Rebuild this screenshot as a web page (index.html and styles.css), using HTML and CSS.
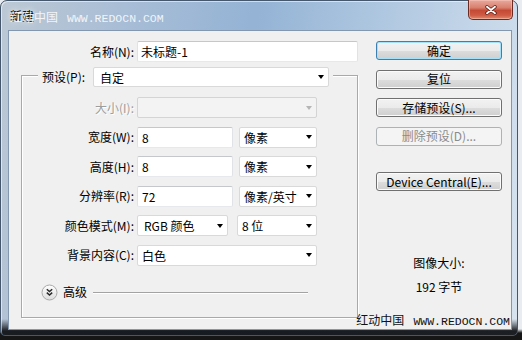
FILE: index.html
```html
<!DOCTYPE html>
<html lang="zh-CN">
<head>
    <meta charset="UTF-8">
    <title>新建</title>
    <link rel="stylesheet" href="styles.css">
</head>
<body>

<div class="window">
    <div class="titlebar">
        <span class="title">新建</span>
        <span class="watermark watermark-top">红动中国<span class="wm-url">WWW.REDOCN.COM</span></span>
        <button class="close-btn" aria-label="关闭">
            <svg width="14" height="10" viewBox="0 0 14 10">
                <path d="M3 1.8 L11 8.2 M11 1.8 L3 8.2" stroke="#5a2018" stroke-width="3.4" stroke-linecap="round"/>
                <path d="M3 1.8 L11 8.2 M11 1.8 L3 8.2" stroke="#fff" stroke-width="1.9" stroke-linecap="round"/>
            </svg>
        </button>
    </div>

    <div class="client">
        <div class="form-col">
            <div class="row">
                <label class="lbl">名称(N):</label>
                <div class="field field-name">未标题-1</div>
            </div>

            <div class="group">
                <div class="preset-row">
                    <label class="preset-lbl">预设(P):</label>
                    <div class="select select-preset">自定</div>
                </div>

                <div class="group-rows">
                    <div class="row">
                        <label class="lbl disabled">大小(I):</label>
                        <div class="select select-wide is-disabled"></div>
                    </div>
                    <div class="row">
                        <label class="lbl">宽度(W):</label>
                        <div class="field field-num">8</div>
                        <div class="select select-unit">像素</div>
                    </div>
                    <div class="row">
                        <label class="lbl">高度(H):</label>
                        <div class="field field-num">8</div>
                        <div class="select select-unit">像素</div>
                    </div>
                    <div class="row">
                        <label class="lbl">分辨率(R):</label>
                        <div class="field field-num">72</div>
                        <div class="select select-unit">像素/英寸</div>
                    </div>
                    <div class="row">
                        <label class="lbl">颜色模式(M):</label>
                        <div class="select select-mode">RGB 颜色</div>
                        <div class="select select-bits">8 位</div>
                    </div>
                    <div class="row">
                        <label class="lbl">背景内容(C):</label>
                        <div class="select select-wide">白色</div>
                    </div>
                </div>

                <div class="advanced">
                    <svg width="17" height="17" viewBox="0 0 17 17">
                        <defs>
                            <linearGradient id="adv" x1="0" y1="0" x2="0" y2="1">
                                <stop offset="0" stop-color="#ffffff"/>
                                <stop offset="1" stop-color="#dcdcdc"/>
                            </linearGradient>
                        </defs>
                        <circle cx="8.5" cy="8.5" r="7.5" fill="url(#adv)" stroke="#a9a9a9"/>
                        <path d="M5.8 5.2 L8.5 7.6 L11.2 5.2 M5.8 8.6 L8.5 11 L11.2 8.6" stroke="#2a2a2a" stroke-width="1.5" fill="none"/>
                    </svg>
                    <span class="adv-text">高级</span>
                    <span class="adv-line"></span>
                </div>
            </div>
        </div>

        <div class="btn-col">
            <button class="btn btn-default">确定</button>
            <button class="btn">复位</button>
            <button class="btn">存储预设(S)...</button>
            <button class="btn" disabled>删除预设(D)...</button>
            <button class="btn btn-device">Device Central(E)...</button>

            <div class="img-size">
                <div>图像大小:</div>
                <div>192 字节</div>
            </div>
        </div>

        <span class="watermark watermark-bottom">红动中国<span class="wm-url">WWW.REDOCN.COM</span></span>
    </div>
</div>

</body>
</html>
```

FILE: styles.css
```css
    body {
        margin: 0;
        width: 522px;
        height: 340px;
        overflow: hidden;
        font-family: "Noto Sans CJK SC", sans-serif;
        font-size: 12px;
        color: #000;
        background: linear-gradient(to bottom, #e9edf1 0, #e9edf1 329px, #161616 333px);
    }

    .window {
        width: 518px;
        height: 336px;
        box-sizing: border-box;
        border: 1px solid #44576c;
        border-radius: 7px 7px 5px 5px;
        padding: 0 5px 5px 7px;
        display: flex;
        flex-direction: column;
        background:
            linear-gradient(to bottom, rgba(12, 14, 18, 0) 318px, rgba(12, 14, 18, .92) 330px),
            linear-gradient(100deg, #bcc8d4 0%, #a8bdd6 22%, #94b3d5 45%, #a9c3de 62%, #c6d7e9 85%, #d8e3ef 100%);
        box-shadow: inset 1px 1px 0 rgba(255, 255, 255, .55);
    }

    /* title bar */
    .titlebar {
        height: 29px;
        flex: none;
        display: flex;
        align-items: flex-start;
        justify-content: space-between;
        position: relative;
    }

    .title {
        padding: 7px 0 0 2px;
        line-height: 16px;
        text-shadow: 0 0 6px rgba(255, 255, 255, .9);
    }

    .close-btn {
        width: 45px;
        height: 20px;
        margin: -1px -1px 0 0;
        padding: 0;
        display: flex;
        align-items: center;
        justify-content: center;
        border: 1px solid #6b2a22;
        border-top: none;
        border-radius: 0 0 5px 5px;
        background: linear-gradient(to bottom, #e9a99c 0%, #d8806f 40%, #c44a35 55%, #cf5a43 80%, #e08a6e 100%);
        box-shadow: inset 0 0 0 1px rgba(255, 210, 200, .45);
    }

    .watermark {
        display: flex;
        align-items: baseline;
        gap: 9px;
        line-height: 14px;
        white-space: nowrap;
    }

    .wm-url {
        font-family: "Liberation Mono", monospace;
        font-size: 11.5px;
    }

    .watermark-top {
        position: absolute;
        left: 2px;
        top: 9px;
        color: rgba(255, 255, 255, .85);
    }

    .watermark-bottom {
        position: absolute;
        right: 1px;
        bottom: 0;
        color: #111;
    }

    /* client area */
    .client {
        flex: 1;
        position: relative;
        display: flex;
        padding: 10px 0 0 12px;
        background: #f0f0f0;
        border: 1px solid #8397ae;
    }

    .form-col {
        width: 337px;
        flex: none;
    }

    .row {
        display: flex;
        align-items: center;
        height: 21px;
    }

    .lbl {
        width: 116px;
        padding-right: 3px;
        box-sizing: border-box;
        text-align: right;
        white-space: nowrap;
        line-height: 16px;
    }

    .lbl.disabled {
        color: #9d9d9d;
        text-shadow: 1px 1px 0 #fff;
    }

    .field, .select {
        height: 21px;
        box-sizing: border-box;
        background: #fff;
        border: 1px solid #d9d9d9;
        border-radius: 2px;
        padding: 0 4px;
        line-height: 19px;
        white-space: nowrap;
    }

    .field {
        border-color: #c4c7cc #dfe2e6 #e6e8eb #dfe2e6;
    }

    .field-name {
        width: 221px;
        padding-left: 3px;
    }

    .field-num {
        width: 96px;
    }

    .select {
        display: flex;
        align-items: center;
        padding-right: 4px;
    }

    .select::after {
        content: "";
        margin-left: auto;
        border-left: 3.5px solid transparent;
        border-right: 3.5px solid transparent;
        border-top: 4px solid #000;
    }

    .select.is-disabled {
        background: #f3f3f3;
        border-color: #d4d4d4;
    }

    .select.is-disabled::after {
        border-top-color: #b5b5b5;
    }

    .select-preset {
        width: 236px;
        height: 20px;
        padding-left: 6px;
    }

    .select-wide {
        width: 180px;
    }

    .select-unit {
        width: 78px;
        margin-left: 6px;
    }

    .select-mode {
        width: 91px;
        padding-left: 6px;
    }

    .select-bits {
        width: 80px;
        margin-left: 9px;
    }

    /* group box */
    .group {
        margin-top: 13px;
        border: 1px solid #a9a9a9;
        box-shadow: 1px 1px 0 #fff, inset 1px 1px 0 #fff;
        padding-bottom: 16px;
    }

    .preset-row {
        display: flex;
        align-items: center;
        height: 20px;
        width: fit-content;
        margin: -9px 0 0 16px;
        padding: 0 4px;
        background: #f0f0f0;
    }

    .preset-lbl {
        width: 51px;
        line-height: 16px;
    }

    .group-rows {
        display: flex;
        flex-direction: column;
        gap: 8.5px;
        margin-top: 10px;
    }

    .group-rows .lbl {
        width: 115px;
    }

    .advanced {
        display: flex;
        align-items: center;
        height: 17px;
        margin-top: 18px;
        padding-left: 19px;
    }

    .adv-text {
        margin-left: 5px;
        line-height: 16px;
    }

    .adv-line {
        flex: 1;
        margin: 1px 49px 0 6px;
        border-top: 1px solid #a3a3a3;
        border-bottom: 1px solid #fff;
    }

    /* buttons */
    .btn-col {
        width: 126px;
        flex: none;
        margin-left: 18px;
        display: flex;
        flex-direction: column;
        gap: 9.5px;
    }

    .btn {
        height: 19px;
        padding: 0;
        font-family: inherit;
        font-size: 12px;
        line-height: 16px;
        color: #000;
        border: 1px solid #707070;
        border-radius: 3px;
        background: linear-gradient(to bottom, #f2f2f2 0%, #ebebeb 50%, #dddddd 51%, #cfcfcf 100%);
        box-shadow: inset 0 0 0 1px #fbfbfb;
    }

    .btn-default {
        border-color: #3c7fb1;
        box-shadow: inset 0 0 0 1px #a4e0f7;
    }

    .btn:disabled {
        color: #8b8b8b;
        border-color: #adb2b5;
        background: #f4f4f4;
        box-shadow: none;
    }

    .btn-device {
        margin-top: 17px;
    }

    .img-size {
        margin-top: 50px;
        text-align: center;
        line-height: 24px;
    }
```
